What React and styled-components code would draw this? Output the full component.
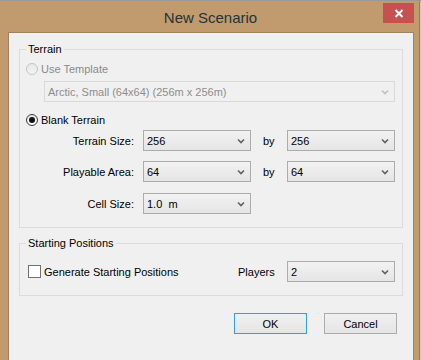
import React from 'react';
import styled, { createGlobalStyle } from 'styled-components';

const GlobalStyle = createGlobalStyle`
  html, body {
    margin: 0;
    padding: 0;
    background: #c19b6d;
  }
  * {
    box-sizing: border-box;
  }
`;

const Window = styled.div`
  width: 421px;
  height: 360px;
  background: #c19b6d;
  border-top: 1px solid #9a9a9a;
  box-shadow: inset -1px 0 #d9c7b0, inset -2px 0 #9d7c57;
  display: flex;
  flex-direction: column;
  font-family: Tahoma, "Liberation Sans", sans-serif;
  font-size: 11px;
  color: #000;
  overflow: hidden;
`;

const TitleBar = styled.div`
  height: 31px;
  display: grid;
  grid-template-columns: 1fr auto 1fr;
  align-items: start;
  padding: 0 7px;
`;

const Title = styled.div`
  grid-column: 2;
  font-family: "Segoe UI", "Liberation Sans", sans-serif;
  font-size: 15px;
  line-height: 20px;
  margin-top: 7px;
  color: #24343a;
`;

const CloseButton = styled.div`
  grid-column: 3;
  justify-self: end;
  width: 31px;
  height: 20px;
  margin-top: 2px;
  background: #c75050;
  display: flex;
  align-items: center;
  justify-content: center;
`;

const Client = styled.div`
  margin-left: 8px;
  width: 406px;
  flex: 1;
  border: 1px solid #a2825d;
  border-bottom: none;
  background: #f0f0f0;
  display: flex;
  flex-direction: column;
`;

const Group = styled.div`
  position: relative;
  margin: ${({ $top }) => $top}px 10px 0;
  border: 1px solid #dcdcdc;
  padding: ${({ $pad }) => $pad};
  display: flex;
  flex-direction: column;
`;

const Legend = styled.span`
  position: absolute;
  top: -8px;
  left: 6px;
  padding: 0 2px;
  background: #f0f0f0;
  line-height: 14px;
`;

const ChoiceRow = styled.label`
  display: flex;
  align-items: center;
  height: 13px;
  margin-top: ${({ $top }) => $top || 0}px;
  color: ${({ disabled }) => (disabled ? '#8a8a8a' : '#000')};
  gap: 3px;
`;

const Radio = styled.span`
  width: 12px;
  height: 12px;
  border-radius: 50%;
  border: 1px solid ${({ disabled }) => (disabled ? '#c4c4c4' : '#3a3a3a')};
  background: ${({ disabled }) =>
    disabled ? 'linear-gradient(#e8e8e8, #f4f4f4)' : 'linear-gradient(#e6e6e6, #ffffff)'};
  display: flex;
  align-items: center;
  justify-content: center;
  margin-left: 6px;
  &::after {
    content: '';
    display: ${({ checked }) => (checked ? 'block' : 'none')};
    width: 6px;
    height: 6px;
    border-radius: 50%;
    background: #111;
  }
`;

const Check = styled.span`
  width: 13px;
  height: 13px;
  border: 1px solid #707070;
  background: #fff;
  margin-left: 8px;
`;

const Combo = styled.div`
  width: ${({ $w }) => $w}px;
  height: 21px;
  border: 1px solid ${({ disabled }) => (disabled ? '#d9d9d9' : '#acacac')};
  background: ${({ disabled }) =>
    disabled ? '#f0f0f0' : 'linear-gradient(#f2f2f2, #e5e5e5)'};
  color: ${({ disabled }) => (disabled ? '#8d8d8d' : '#000')};
  display: flex;
  align-items: center;
  justify-content: space-between;
  padding: 0 5px 0 3px;
  margin-left: ${({ $left }) => $left || 0}px;
  margin-top: ${({ $top }) => $top || 0}px;
  white-space: pre;
`;

const Chevron = ({ disabled }) => (
  <svg width="8" height="6" viewBox="0 0 8 6">
    <path
      d="M1 1.5 L4 4.5 L7 1.5"
      fill="none"
      stroke={disabled ? '#c0c0c0' : '#606060'}
      strokeWidth="1.6"
    />
  </svg>
);

const Select = ({ value, width, disabled, left, top }) => (
  <Combo $w={width} disabled={disabled} $left={left} $top={top}>
    <span>{value}</span>
    <Chevron disabled={disabled} />
  </Combo>
);

const FormGrid = styled.div`
  display: grid;
  grid-template-columns: 123px 108px 36px 108px;
  align-items: center;
  margin-top: ${({ $top }) => $top}px;
`;

const FieldLabel = styled.span`
  text-align: right;
  padding-right: 9px;
`;

const By = styled.span`
  padding-left: 12px;
`;

const PlayersRow = styled.div`
  display: grid;
  grid-template-columns: 1fr 49px 108px;
  align-items: center;
  height: 21px;
  padding-right: 7px;
`;

const ButtonBar = styled.div`
  display: flex;
  justify-content: flex-end;
  gap: 17px;
  margin-top: 17px;
  padding-right: 16px;
`;

const Button = styled.div`
  width: 73px;
  height: 21px;
  border: 1px solid ${({ $default }) => ($default ? '#3399ff' : '#acacac')};
  background: linear-gradient(#f0f0f0, #e5e5e5);
  display: flex;
  align-items: center;
  justify-content: center;
`;

const rows = [
  { label: 'Terrain Size:', a: '256', b: '256', top: 4 },
  { label: 'Playable Area:', a: '64', b: '64', top: 10 },
];

export default function App() {
  return (
    <>
      <GlobalStyle />
      <Window>
        <TitleBar>
          <Title>New Scenario</Title>
          <CloseButton>
            <svg width="10" height="9" viewBox="0 0 10 9">
              <path d="M1.5 1 L8.5 8 M8.5 1 L1.5 8" stroke="#fff" strokeWidth="2" />
            </svg>
          </CloseButton>
        </TitleBar>
        <Client>
          <Group $top={16} $pad="12px 0 13px">
            <Legend>Terrain</Legend>
            <ChoiceRow disabled>
              <Radio disabled />
              Use Template
            </ChoiceRow>
            <Select value="Arctic, Small (64x64) (256m x 256m)" width={351} disabled left={24} top={6} />
            <ChoiceRow $top={11}>
              <Radio checked />
              Blank Terrain
            </ChoiceRow>
            {rows.map((r) => (
              <FormGrid key={r.label} $top={r.top}>
                <FieldLabel>{r.label}</FieldLabel>
                <Select value={r.a} width={108} />
                <By>by</By>
                <Select value={r.b} width={108} />
              </FormGrid>
            ))}
            <FormGrid $top={11}>
              <FieldLabel>Cell Size:</FieldLabel>
              <Select value="1.0  m" width={108} />
            </FormGrid>
          </Group>
          <Group $top={15} $pad="17px 0 13px">
            <Legend>Starting Positions</Legend>
            <PlayersRow>
              <ChoiceRow>
                <Check />
                Generate Starting Positions
              </ChoiceRow>
              <span>Players</span>
              <Select value="2" width={108} />
            </PlayersRow>
          </Group>
          <ButtonBar>
            <Button $default>OK</Button>
            <Button>Cancel</Button>
          </ButtonBar>
        </Client>
      </Window>
    </>
  );
}
